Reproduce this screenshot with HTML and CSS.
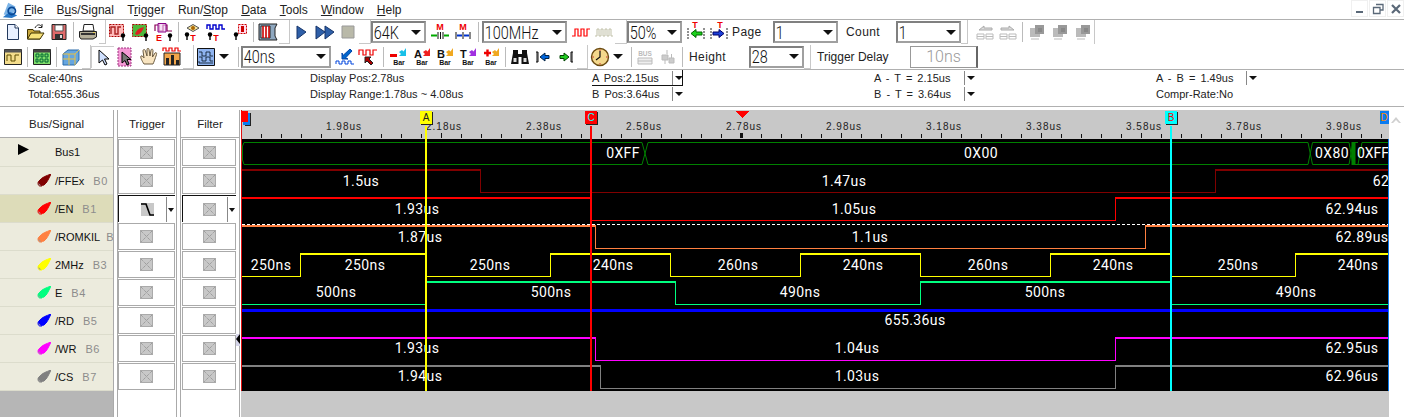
FILE: index.html
```html
<!DOCTYPE html>
<html lang="en">
<head>
    <meta charset="UTF-8">
    <title>Logic Analyzer</title>
    <link rel="stylesheet" href="styles.css">
</head>
<body>

<svg class="defs">
    <symbol id="pin" viewBox="0 0 8 8"><circle cx="4" cy="2.5" r="2.2" fill="#000"/><path d="M4 3V8" stroke="#000" stroke-width="1.4"/></symbol>
    <symbol id="new" viewBox="0 0 20 20"><path d="M4.5 2.5H12L15.5 6V17.5H4.5Z" fill="#e8f0ff" stroke="#23395d"/><path d="M12 2.5V6H15.5" fill="#fff" stroke="#23395d"/></symbol>
    <symbol id="open" viewBox="0 0 20 20"><path d="M1.5 7.5H7L8 9H14V17H1.5Z" fill="#c9a73c" stroke="#3d3000"/><path d="M1.5 17L5 11H18L14 17Z" fill="#f7e27a" stroke="#3d3000"/><path d="M9 6C11 2 14 2 16 5M16 2V5.5H12.5" fill="none" stroke="#222"/></symbol>
    <symbol id="save" viewBox="0 0 20 20"><path d="M3 2.5H17V17.5H3Z" fill="#e06a6a" stroke="#222"/><path d="M6 3H14V9H6Z" fill="#fff" stroke="#555"/><path d="M6 12H14V17H6Z" fill="#333"/><path d="M11 13H13V16H11Z" fill="#ddd"/></symbol>
    <symbol id="print" viewBox="0 0 20 20"><path d="M6 2.5H15L16 9H5Z" fill="#fff" stroke="#222"/><path d="M1.5 9.5H18.5V15L15 17H3L1.5 15Z" fill="#b5b09a" stroke="#222"/><path d="M3 12H17" stroke="#333" stroke-width="2"/><path d="M15 10.5H17" stroke="#e8d050"/></symbol>
    <symbol id="trigbox" viewBox="0 0 20 20"><path d="M1.5 2.5H15.5V14.5H1.5Z" fill="#fbb" stroke="#a00" stroke-dasharray="2 1"/><path d="M3 12V5H7V12H10V5H13" fill="none" stroke="#a22" stroke-width="1.4"/><use href="#pin" x="11" y="11" width="8" height="8"/></symbol>
    <symbol id="trigfill" viewBox="0 0 20 20"><path d="M1.5 2.5H15.5V14.5H1.5Z" fill="#4eb83c" stroke="#a00" stroke-dasharray="2 1"/><path d="M4 12C6 7 9 6 13 5C12 9 9 12 6 13Z" fill="#d22"/><use href="#pin" x="11" y="11" width="8" height="8"/></symbol>
    <symbol id="edge" viewBox="0 0 20 20"><path d="M1 9V3H5V9H9V3H13V9H18" fill="none" stroke="#805" stroke-width="1.2"/><path d="M4 1.5H12V10H4Z" fill="#f0c8f0" fill-opacity=".6" stroke="#808"/><text class="ico-t red" x="5" y="19">E</text><use href="#pin" x="12" y="11" width="8" height="8"/></symbol>
    <symbol id="eye" viewBox="0 0 20 20"><path d="M4 6L10 2.5L16 6L10 9.5Z" fill="#f4e4a0" stroke="#555"/><circle cx="10" cy="6" r="2" fill="#a60"/><use href="#pin" x="0" y="10" width="8" height="8"/><text class="ico-t red" x="10" y="19">T</text></symbol>
    <symbol id="pulse" viewBox="0 0 20 20"><path d="M1 7V3H4V7H7V3H10V7H13V3H16V7H19" fill="none" stroke="#00c" stroke-width="1.4"/><use href="#pin" x="0" y="10" width="8" height="8"/><text class="ico-t red" x="10" y="19">T</text></symbol>
    <symbol id="pinbox" viewBox="0 0 20 20"><path d="M9.5 2.5H17.5V11.5H9.5Z" fill="#fde" stroke="#c00" stroke-dasharray="2 1"/><path d="M12 4H15V10H12Z" fill="#c00"/><use href="#pin" x="3" y="10" width="8" height="8"/></symbol>
    <symbol id="film" viewBox="0 0 20 20"><path d="M1 2H19L17 6V14L19 18H1Z" fill="#8fa8c0" stroke="#222"/><path d="M3 4H12V16H3Z" fill="#fff" stroke="#222"/><path d="M5 4V16M8 4V16M11 4V16" stroke="#c00" stroke-width="1.6"/></symbol>
    <symbol id="play" viewBox="0 0 20 20"><path d="M5 4L14 10L5 17Z" fill="#2e5fa8" stroke="#17356a"/></symbol>
    <symbol id="run" viewBox="0 0 20 20"><path d="M1 4L10 10L1 17Z" fill="#2e5fa8" stroke="#17356a"/><path d="M10 4L19 10L10 17Z" fill="#2e5fa8" stroke="#17356a"/></symbol>
    <symbol id="stop" viewBox="0 0 20 20"><path d="M4 4H16V16H4Z" fill="#b9b9a9" stroke="#999"/></symbol>
    <symbol id="m1" viewBox="0 0 20 20"><text class="ico-t red" x="10" y="8">M</text><path d="M8 10V17M10.500 10V17M13 10V17" stroke="#111"/><path d="M1 13.500H7M19 13.500H14" stroke="#0a0" stroke-width="2"/></symbol>
    <symbol id="m2" viewBox="0 0 20 20"><text class="ico-t red" x="10" y="8">M</text><path d="M3 10V17M10 10V17M17 10V17" stroke="#111"/><path d="M4 13.500H9M11 13.500H16" stroke="#03c" stroke-width="2"/></symbol>
    <symbol id="wave-r" viewBox="0 0 20 20"><path d="M1 14H4V7H7V14H10V7H13V14H16V7H19" fill="none" stroke="#f00" stroke-width="1.2"/></symbol>
    <symbol id="wave-g" viewBox="0 0 20 20"><path d="M1 14H3V7H5V14H7V7H9V14H11V7H13V14H15V7H17V14H19" fill="none" stroke="#c0c0a8" stroke-width="1"/></symbol>
    <symbol id="tleft" viewBox="0 0 20 20"><path d="M2 6V17M18 6V17" stroke="#222" stroke-dasharray="2 1"/><path d="M5 11.500L10 7.500V10H16V13H10V15.500Z" fill="#1cd11c" stroke="#060"/><text class="ico-t red" x="9" y="6">T</text></symbol>
    <symbol id="tright" viewBox="0 0 20 20"><path d="M2 6V17M18 6V17" stroke="#222" stroke-dasharray="2 1"/><path d="M15 11.500L10 7.500V10H4V13H10V15.500Z" fill="#1b3fd8" stroke="#006"/><text class="ico-t red" x="11" y="6">T</text></symbol>
    <symbol id="page-l" viewBox="0 0 20 20"><path d="M4 8L9 4V6H17V8Z" fill="#ddd" stroke="#aaa"/><path d="M2 12H9V17H2ZM11 12H18V17H11ZM2 14.5H9M11 14.5H18" fill="none" stroke="#bbb"/></symbol>
    <symbol id="page-r" viewBox="0 0 20 20"><path d="M16 8L11 4V6H3V8Z" fill="#ddd" stroke="#aaa"/><path d="M2 12H9V17H2ZM11 12H18V17H11ZM2 14.5H9M11 14.5H18" fill="none" stroke="#bbb"/></symbol>
    <symbol id="gray" viewBox="0 0 20 20"><path d="M3 6H13V15H3Z" fill="#bbb"/><path d="M8 3H17V12H8Z" fill="#999"/><path d="M11 6H15V10H11Z" fill="#888"/><path d="M4 16H12V18H4Z" fill="#ddd"/></symbol>
    <symbol id="scope" viewBox="0 0 20 20"><path d="M1.5 2.5H18.5V17.5H1.5Z" fill="#f3dc8b" stroke="#222"/><path d="M1.5 2.5H18.5V5.5H1.5Z" fill="#555"/><path d="M4 14V8H8V14H12V8H16" fill="none" stroke="#5a4a00"/></symbol>
    <symbol id="bits" viewBox="0 0 20 20"><path d="M1.5 2.5H18.5V17.5H1.5Z" fill="#7fdc6a" stroke="#222"/><path d="M1.5 2.5H18.5V5.5H1.5Z" fill="#444"/><path d="M4 7H7V10H4ZM9 7H11V10H9ZM13 7H16V10H13ZM4 12H6V15H4ZM8 12H11V15H8ZM13 12H16V15H13Z" fill="none" stroke="#063"/></symbol>
    <symbol id="cube" viewBox="0 0 20 20"><path d="M2 7L7 3H18V13L14 18H2Z" fill="#66a6e0" stroke="#2a6aa8"/><path d="M2 7H14V18M14 7L18 3M8 7V18M2 12H14" fill="none" stroke="#e8c040"/></symbol>
    <symbol id="arrow" viewBox="0 0 20 20"><path d="M6 3V16L9.5 13L12 18L14 17L11.5 12H16Z" fill="#cfe0ff" stroke="#000"/></symbol>
    <symbol id="arrow-p" viewBox="0 0 20 20"><path d="M2 1H15V19H2Z" fill="#f49ad6" stroke="#a03080" stroke-dasharray="2 1"/><path d="M6 5V16L9 13.5L11 18L13 17L11 12.5H15Z" fill="#777" stroke="#000"/></symbol>
    <symbol id="hand" viewBox="0 0 20 20"><path d="M5 17C3 14 1 10 2 9C3 8 5 11 5 11L4 4C4 2 6 2 6.500 4L8 9L8 2.500C8 1 10 1 10 2.500L11 9L12 3C12.500 1.500 14 2 14 3.500L13.500 10L16 6C17 5 18 6 17.500 7.500C16 12 15 15 14 17Z" fill="#f8e4c0" stroke="#6a5a40"/></symbol>
    <symbol id="bars" viewBox="0 0 20 20"><path d="M1 4V1H4V4H7V1H10V4H13V1H16V4H19" fill="none" stroke="#e00" stroke-width="1.2"/><path d="M2 6H18V18H2Z" fill="#f2a64a" stroke="#222"/><path d="M4 18V11H7V18ZM9 18V8H12V18ZM14 18V13H17V18Z" fill="#222"/></symbol>
    <symbol id="grid" viewBox="0 0 20 20"><path d="M1.500 1.500H18.500V18.500H1.500Z" fill="#8fb4f0" stroke="#111"/><path d="M3 5H6V9H10V5H14V9H17M3 10H6V14H10V10H14V14H17M3 14V16H17" fill="none" stroke="#123" stroke-width=".9"/></symbol>
    <symbol id="to-wave" viewBox="0 0 20 20"><path d="M15 2L8 8.500L7 6V12H13L10.500 11L17 4Z" fill="#06c" stroke="#04a"/><path d="M1 17V14H4V17H7V14H10V17H13V14H16V17H19" fill="none" stroke="#04d"/></symbol>
    <symbol id="from-wave" viewBox="0 0 20 20"><path d="M1 8V3H5V8H8V3H12V8H15V3H19" fill="none" stroke="#e00" stroke-width="1.2"/><path d="M7 10V16L9 14L13 18L15 16L11 12L13 10Z" fill="#a00" stroke="#222"/></symbol>
    <symbol id="bar-red" viewBox="0 0 20 20"><path d="M1 7H8V10H1Z" fill="#e00"/><path d="M17 1V9H10L12 7L10 5L13 3L14.500 4.500Z" fill="#18c0e8"/><text class="ico-b" x="10" y="18">Bar</text></symbol>
    <symbol id="bar-a" viewBox="0 0 20 20"><text class="ico-l" x="2" y="11">A</text><path d="M18 1V9H11L13 7L11 5L14 3L15.500 4.500Z" fill="#f02020"/><text class="ico-b" x="10" y="18">Bar</text></symbol>
    <symbol id="bar-b" viewBox="0 0 20 20"><text class="ico-l" x="2" y="11">B</text><path d="M18 1V9H11L13 7L11 5L14 3L15.500 4.500Z" fill="#f0a820"/><text class="ico-b" x="10" y="18">Bar</text></symbol>
    <symbol id="bar-t" viewBox="0 0 20 20"><text class="ico-l" x="2" y="11">T</text><path d="M18 1V9H11L13 7L11 5L14 3L15.500 4.500Z" fill="#a030e0"/><text class="ico-b" x="10" y="18">Bar</text></symbol>
    <symbol id="bar-plus" viewBox="0 0 20 20"><path d="M3 6H10M6.500 2.500V9.500" stroke="#e00" stroke-width="2.400"/><path d="M18 1V9H11L13 7L11 5L14 3L15.500 4.500Z" fill="#f0a820"/><text class="ico-b" x="10" y="18">Bar</text></symbol>
    <symbol id="binoc" viewBox="0 0 20 20"><path d="M3 3H8V7H12V3H17V6L19 17H11.500V10H8.500V17H1L3 6Z" fill="#111"/><path d="M3.500 11H6.500V15H3.500ZM13.500 11H16.500V15H13.500Z" fill="#ddd"/></symbol>
    <symbol id="jump-l" viewBox="0 0 20 20"><path d="M3 5H5V15H3M4 5V15" fill="none" stroke="#111"/><path d="M7 10L12 6V8.500H16V11.500H12V14Z" fill="#06d" stroke="#024"/></symbol>
    <symbol id="jump-r" viewBox="0 0 20 20"><path d="M17 5H15V15H17M16 5V15" fill="none" stroke="#111"/><path d="M13 10L8 6V8.500H4V11.500H8V14Z" fill="#2c2" stroke="#040"/></symbol>
    <symbol id="clock" viewBox="0 0 20 20"><circle cx="10" cy="10" r="8.500" fill="#f4d88c" stroke="#6a4a10" stroke-width="1.400"/><path d="M10 4V10L6 13" fill="none" stroke="#111" stroke-width="1.200"/><path d="M10 2.500V4M10 16V17.500M2.500 10H4M16 10H17.500" stroke="#c33"/></symbol>
    <symbol id="bus-off" viewBox="0 0 20 20"><text class="ico-g" x="10" y="9">BUS</text><path d="M3 11H17V17H3ZM3 14H17" fill="#eee" stroke="#bbb"/></symbol>
    <symbol id="net-off" viewBox="0 0 20 20"><path d="M9 3V7M4 8H10V13H4ZM11 11H16V16H11ZM7 13V17M13.500 7V11" fill="#ccc" stroke="#bbb"/></symbol>
    <symbol id="cell-x" viewBox="0 0 13 13"><path d="M0 0H13V13H0Z" fill="#c8c8c8"/><path d="M.5.5H12.500V12.500H.5ZM1 1L12 12M12 1L1 12" fill="none" stroke="#8c8c8c" stroke-dasharray="1 1"/></symbol>
    <symbol id="cell-fall" viewBox="0 0 13 13"><path d="M0 0H13V13H0Z" fill="#c8c8c8"/><path d="M0 1H5L9 12H13" fill="none" stroke="#000" stroke-width="1.600"/></symbol>
    <symbol id="flag" viewBox="0 0 14 13"><path d="M1 9C1 7 3 7 3 7L5 12H3C2 12 1 11 1 9Z" fill="#999"/><path d="M2 7C5 3 9 2 14 0C12 4 10 9 7 11C5 12 1 10 2 7Z" fill="currentColor"/></symbol>
</svg>

<div class="menubar">
    <svg class="app-icon" viewBox="0 0 20 20"><path d="M3 15L8 2L16 6L13 17Z" fill="#7cb4e8"/><path d="M2 18L10 12L18 16L12 19Z" fill="#2878c8"/><circle cx="12" cy="11" r="4" fill="none" stroke="#0a4a98" stroke-width="2"/></svg>
    <nav class="menu">
        <span><u>F</u>ile</span>
        <span>B<u>u</u>s/Signal</span>
        <span>T<u>r</u>igger</span>
        <span>Run/<u>S</u>top</span>
        <span><u>D</u>ata</span>
        <span><u>T</u>ools</span>
        <span><u>W</u>indow</span>
        <span><u>H</u>elp</span>
    </nav>
    <div class="winbtns">
        <span class="winbtn"><svg viewBox="0 0 12 12"><path d="M2 9H9" stroke="#5a6878" stroke-width="2"/></svg></span>
        <span class="winbtn"><svg viewBox="0 0 12 12"><path d="M4 1.500H11V7H8M1.500 4.500H8V10.500H1.500Z" fill="none" stroke="#5a6878" stroke-width="1.300"/></svg></span>
        <span class="winbtn"><svg viewBox="0 0 12 12"><path d="M2 2L10 10M10 2L2 10" stroke="#5a6878" stroke-width="2.200"/></svg></span>
    </div>
</div>

<div class="toolbar row1">
    <span class="btn"><svg><use href="#new"/></svg></span>
    <span class="btn"><svg><use href="#open"/></svg></span>
    <span class="btn"><svg><use href="#save"/></svg></span>
    <i class="sep"></i>
    <span class="btn"><svg><use href="#print"/></svg></span>
    <i class="grip"></i>
    <span class="btn"><svg><use href="#trigbox"/></svg></span>
    <span class="btn"><svg><use href="#trigfill"/></svg></span>
    <span class="btn"><svg><use href="#edge"/></svg></span>
    <i class="sep"></i>
    <span class="btn"><svg><use href="#eye"/></svg></span>
    <span class="btn"><svg><use href="#pulse"/></svg></span>
    <span class="btn"><svg><use href="#pinbox"/></svg></span>
    <i class="sep"></i>
    <span class="btn"><svg><use href="#film"/></svg></span>
    <i class="grip wide"></i>
    <span class="btn"><svg><use href="#play"/></svg></span>
    <span class="btn"><svg><use href="#run"/></svg></span>
    <span class="btn"><svg><use href="#stop"/></svg></span>
    <i class="grip wider"></i>
    <div class="combo w55"><span>64K</span><b></b></div>
    <i class="gap2"></i>
    <span class="btn"><svg><use href="#m1"/></svg></span>
    <span class="btn"><svg><use href="#m2"/></svg></span>
    <i class="sep gap8"></i>
    <div class="combo w85"><span>100MHz</span><b></b></div>
    <i class="gap2"></i>
    <span class="btn"><svg><use href="#wave-r"/></svg></span>
    <span class="btn"><svg><use href="#wave-g"/></svg></span>
    <i class="grip wider"></i>
    <div class="combo w55"><span>50%</span><b></b></div>
    <i class="gap2"></i>
    <span class="btn"><svg><use href="#tleft"/></svg></span>
    <span class="btn"><svg><use href="#tright"/></svg></span>
    <span class="tb-label page">Page</span>
    <div class="combo w65"><span>1</span><b></b></div>
    <span class="tb-label count">Count</span>
    <div class="combo w65"><span>1</span><b></b></div>
    <i class="grip"></i>
    <span class="btn first-off"><svg><use href="#page-l"/></svg></span>
    <span class="btn"><svg><use href="#page-r"/></svg></span>
    <i class="sep"></i>
    <span class="btn"><svg><use href="#gray"/></svg></span>
    <span class="btn"><svg><use href="#gray"/></svg></span>
    <span class="btn"><svg><use href="#gray"/></svg></span>
    <i class="end"></i>
</div>

<div class="toolbar row2">
    <span class="btn"><svg><use href="#scope"/></svg></span>
    <i class="sep"></i>
    <span class="btn"><svg><use href="#bits"/></svg></span>
    <i class="sep"></i>
    <span class="btn"><svg><use href="#cube"/></svg></span>
    <i class="grip tools"></i>
    <span class="btn pressed"><svg><use href="#arrow"/></svg></span>
    <span class="btn"><svg><use href="#arrow-p"/></svg></span>
    <span class="btn"><svg><use href="#hand"/></svg></span>
    <span class="btn"><svg><use href="#bars"/></svg></span>
    <i class="grip wide"></i>
    <span class="btn"><svg><use href="#grid"/></svg></span>
    <b class="drop"></b>
    <i class="sep"></i>
    <div class="combo w90"><span>40ns</span><b></b></div>
    <i class="gap2"></i>
    <span class="btn"><svg><use href="#to-wave"/></svg></span>
    <span class="btn"><svg><use href="#from-wave"/></svg></span>
    <i class="sep gap8"></i>
    <span class="btn"><svg><use href="#bar-red"/></svg></span>
    <span class="btn"><svg><use href="#bar-a"/></svg></span>
    <span class="btn"><svg><use href="#bar-b"/></svg></span>
    <span class="btn"><svg><use href="#bar-t"/></svg></span>
    <span class="btn"><svg><use href="#bar-plus"/></svg></span>
    <i class="sep"></i>
    <span class="btn"><svg><use href="#binoc"/></svg></span>
    <span class="btn"><svg><use href="#jump-l"/></svg></span>
    <span class="btn"><svg><use href="#jump-r"/></svg></span>
    <i class="grip wide"></i>
    <span class="btn"><svg><use href="#clock"/></svg></span>
    <b class="drop"></b>
    <i class="sep thin"></i>
    <span class="btn"><svg><use href="#bus-off"/></svg></span>
    <span class="btn"><svg><use href="#net-off"/></svg></span>
    <i class="sep"></i>
    <span class="tb-label height">Height</span>
    <div class="combo w55"><span>28</span><b></b></div>
    <i class="grip"></i>
    <span class="tb-label delay">Trigger Delay</span>
    <div class="delay-box">10ns</div>
</div>

<div class="status">
    <div class="stat tight"><p>Scale:40ns</p><p>Total:655.36us</p></div>
    <div class="stat tight"><p>Display Pos:2.78us</p><p>Display Range:1.78us ~ 4.08us</p></div>
    <div class="stat">
        <p class="pick boxed"><span>A Pos:2.15us</span><b></b></p>
        <p class="pick"><span>B Pos:3.64us</span><b></b></p>
    </div>
    <div class="stat">
        <p class="pick"><span>A - T = 2.15us</span><b></b></p>
        <p class="pick"><span>B - T = 3.64us</span><b></b></p>
    </div>
    <div class="stat">
        <p class="pick"><span>A - B = 1.49us</span><b></b></p>
        <p>Compr-Rate:No</p>
    </div>
</div>

<div class="main">
    <div class="signals">
        <div class="col-head">Bus/Signal</div>
        <div class="sig bus"><svg class="tri" viewBox="0 0 11 11"><path d="M0 0L11 5.500L0 11Z"/></svg><span class="name">Bus1</span></div>
        <div class="sig"><svg class="flag c0"><use href="#flag"/></svg><span class="name">/FFEx</span><span class="bit">B0</span></div>
        <div class="sig active"><svg class="flag c1"><use href="#flag"/></svg><span class="name">/EN</span><span class="bit">B1</span></div>
        <div class="sig"><svg class="flag c2"><use href="#flag"/></svg><span class="name">/ROMKIL</span><span class="bit short">B</span></div>
        <div class="sig"><svg class="flag c3"><use href="#flag"/></svg><span class="name">2MHz</span><span class="bit">B3</span></div>
        <div class="sig"><svg class="flag c4"><use href="#flag"/></svg><span class="name">E</span><span class="bit">B4</span></div>
        <div class="sig"><svg class="flag c5"><use href="#flag"/></svg><span class="name">/RD</span><span class="bit">B5</span></div>
        <div class="sig"><svg class="flag c6"><use href="#flag"/></svg><span class="name">/WR</span><span class="bit">B6</span></div>
        <div class="sig"><svg class="flag c7"><use href="#flag"/></svg><span class="name">/CS</span><span class="bit">B7</span></div>
    </div>

    <div class="col trigger">
        <div class="col-head">Trigger</div>
        <div class="cell"><svg><use href="#cell-x"/></svg></div>
        <div class="cell"><svg><use href="#cell-x"/></svg></div>
        <div class="cell open"><svg><use href="#cell-fall"/></svg><b></b></div>
        <div class="cell"><svg><use href="#cell-x"/></svg></div>
        <div class="cell"><svg><use href="#cell-x"/></svg></div>
        <div class="cell"><svg><use href="#cell-x"/></svg></div>
        <div class="cell"><svg><use href="#cell-x"/></svg></div>
        <div class="cell"><svg><use href="#cell-x"/></svg></div>
        <div class="cell"><svg><use href="#cell-x"/></svg></div>
    </div>

    <div class="col filter">
        <div class="col-head">Filter</div>
        <div class="cell"><svg><use href="#cell-x"/></svg></div>
        <div class="cell"><svg><use href="#cell-x"/></svg></div>
        <div class="cell open"><svg><use href="#cell-x"/></svg><b></b></div>
        <div class="cell"><svg><use href="#cell-x"/></svg></div>
        <div class="cell"><svg><use href="#cell-x"/></svg></div>
        <div class="cell"><svg><use href="#cell-x"/></svg></div>
        <div class="cell"><svg><use href="#cell-x"/></svg></div>
        <div class="cell"><svg><use href="#cell-x"/></svg></div>
        <div class="cell"><svg><use href="#cell-x"/></svg></div>
        <span class="splitter"><svg viewBox="0 0 4 10"><path d="M4 0V10L0 5Z"/></svg></span>
    </div>

    <!-- viewBox uses page coordinates so the trace numbers read straight off the capture -->
    <svg class="wave" viewBox="241 110 1148 307">
        <rect class="ruler" x="241" y="110" width="1148" height="307"/>
        <rect class="scope" x="242" y="139" width="1147" height="252"/>

        <path class="tick" d="M261.500 134V138M281.500 134V138M301.500 134V138M321.500 134V138M361.500 134V138M381.500 134V138M401.500 134V138M421.500 134V138M461.500 134V138M481.500 134V138M501.500 134V138M521.500 134V138M561.500 134V138M581.500 134V138M601.500 134V138M621.500 134V138M661.500 134V138M681.500 134V138M701.500 134V138M721.500 134V138M761.500 134V138M781.500 134V138M801.500 134V138M821.500 134V138M861.500 134V138M881.500 134V138M901.500 134V138M921.500 134V138M961.500 134V138M981.500 134V138M1001.500 134V138M1021.500 134V138M1061.500 134V138M1081.500 134V138M1101.500 134V138M1121.500 134V138M1161.500 134V138M1181.500 134V138M1201.500 134V138M1221.500 134V138M1261.500 134V138M1281.500 134V138M1301.500 134V138M1321.500 134V138M1361.500 134V138M1381.500 134V138"/>
        <path class="tick" d="M341.500 133V138M441.500 133V138M541.500 133V138M641.500 133V138M841.500 133V138M941.500 133V138M1041.500 133V138M1141.500 133V138M1241.500 133V138M1341.500 133V138"/>
        <path class="tick now" d="M741.500 133V138"/>
        <g class="rule-txt">
            <text x="344" y="130">1.98us</text><text x="444" y="130">2.18us</text><text x="544" y="130">2.38us</text>
            <text x="644" y="130">2.58us</text><text x="744" y="130">2.78us</text><text x="844" y="130">2.98us</text>
            <text x="944" y="130">3.18us</text><text x="1044" y="130">3.38us</text><text x="1144" y="130">3.58us</text>
            <text x="1244" y="130">3.78us</text><text x="1344" y="130">3.98us</text>
        </g>

        <!-- bus -->
        <path class="bus" d="M250 142.500H244L242.500 146V160L244 164.500H642L648 142.500H1308L1312.500 164.500H1349L1353 142.500H1358M250 142.500H642L648 164.500H1308L1312.500 142.500H1349L1353 164.500H1358L1362 142.500H1389M1358 164.500L1362 164.500H1389"/>
        <path class="bus fat" d="M1352.500 142V165M1354.500 142V165"/>

        <!-- bit traces: high level thick, low level thin -->
        <path class="c0 hi" d="M242 170H481M1215 170H1389"/><path class="c0" d="M480.500 170V192.500H1215.500V170"/>
        <path class="c1 hi" d="M242 198H591M1115 198H1389"/><path class="c1" d="M591.500 198V220.500H1115.500V198"/>
        <path class="dash" d="M242 224.500H1389"/>
        <path class="c2 hi" d="M242 226H596M1145 226H1389"/><path class="c2" d="M595.500 226V248.500H1145.500V226"/>
        <path class="c3 hi" d="M300 254H426M550 254H671M800 254H921M1050 254H1171M1295 254H1389"/>
        <path class="c3" d="M242 276.500H300.500V254M425.500 254V276.500H550.500V254M670.500 254V276.500H800.500V254M920.500 254V276.500H1050.500V254M1170.500 254V276.500H1295.500V254"/>
        <path class="c4 hi" d="M426 282H676M920 282H1171"/>
        <path class="c4" d="M242 304.500H426.500V282M675.500 282V304.500H920.500V282M1170.500 282V304.500H1389"/>
        <path class="c5 hi fat3" d="M242 310H1389"/>
        <path class="c6 hi" d="M242 338H596M1115 338H1389"/><path class="c6" d="M595.500 338V360.500H1115.500V338"/>
        <path class="c7 hi" d="M242 366H601M1115 366H1389"/><path class="c7" d="M600.500 366V388.500H1115.500V366"/>

        <g class="lbl">
            <text x="623" y="158">0XFF</text><text x="981" y="158">0X00</text><text x="1332" y="158">0X80</text><text class="snug" x="1373" y="158">0XFF</text>
            <text x="361" y="186">1.5us</text><text x="844" y="186">1.47us</text><text x="1381" y="186">62</text>
            <text x="417" y="214">1.93us</text><text x="854" y="214">1.05us</text><text x="1352" y="214">62.94us</text>
            <text x="420" y="242">1.87us</text><text x="870" y="242">1.1us</text><text x="1362" y="242">62.89us</text>
            <text x="271" y="270">250ns</text><text x="365" y="270">250ns</text><text x="490" y="270">250ns</text><text x="613" y="270">240ns</text><text x="738" y="270">260ns</text><text x="863" y="270">240ns</text><text x="988" y="270">260ns</text><text x="1113" y="270">240ns</text><text x="1238" y="270">250ns</text><text x="1358" y="270">240ns</text>
            <text x="336" y="297">500ns</text><text x="551" y="297">500ns</text><text x="800" y="297">490ns</text><text x="1045" y="297">500ns</text><text x="1296" y="297">490ns</text>
            <text x="915" y="325">655.36us</text>
            <text x="417" y="353">1.93us</text><text x="857" y="353">1.04us</text><text x="1352" y="353">62.95us</text>
            <text x="420" y="381">1.94us</text><text x="857" y="381">1.03us</text><text x="1352" y="381">62.96us</text>
        </g>

        <!-- cursors and their flags -->
        <path class="cur a" d="M426 126V391"/>
        <path class="cur b" d="M591 126V391"/>
        <path class="cur c" d="M1171 126V391"/>
        <rect class="edge-l" x="241" y="110" width="1" height="281"/>
        <rect class="edge-r" x="1388" y="139" width="1" height="252"/>

        <rect class="mk-sh" x="245" y="113" width="6" height="13"/><rect fill="#0a7cf0" x="243" y="113" width="7" height="12"/><rect fill="#f00" x="241" y="111" width="7" height="11"/>
        <rect class="mk-sh" x="421" y="112" width="12" height="13"/><rect fill="#ff0" x="420" y="111" width="12" height="13"/><text class="mk mk-k" x="426" y="121">A</text>
        <rect class="mk-sh" x="586" y="112" width="12" height="13"/><rect fill="#f00" x="585" y="111" width="12" height="13"/><text class="mk mk-c" x="591" y="121">C</text>
        <rect class="mk-sh" x="1166" y="112" width="12" height="13"/><rect fill="#0ff" x="1165" y="111" width="12" height="13"/><text class="mk mk-r" x="1171" y="121">B</text>
        <rect fill="#0a7cf0" x="1380" y="111" width="9" height="13"/><text class="mk mk-o" x="1384" y="121">D</text>
        <path class="now-mark" d="M735 111H749L742 118Z"/>
    </svg>

    <div class="vscroll"><svg viewBox="0 0 10 6"><path d="M0 6L5 0L10 6L8 6L5 3L2 6Z"/></svg></div>
</div>

</body>
</html>
```

FILE: styles.css
```css
/* Global */
* {
    box-sizing: border-box;
}

html, body {
    margin: 0;
    padding: 0;
}

body {
    width: 1404px;
    height: 417px;
    overflow: hidden;
    background: #fff;
    color: #111;
    font-family: "Liberation Sans", Arial, sans-serif;
    font-size: 11px;
}

p {
    margin: 0;
}

.defs {
    display: none;
}

.ico-t { font: bold 9px "Liberation Sans", sans-serif; text-anchor: middle; fill: #111; }
.ico-t.red { fill: #e00; }
.ico-b { font: bold 7px "Liberation Sans", sans-serif; text-anchor: middle; fill: #111; }
.ico-l { font: bold 11px "Liberation Sans", sans-serif; fill: #111; }
.ico-g { font: bold 6.500px "Liberation Sans", sans-serif; text-anchor: middle; fill: #bbb; }

/* Menu */
.menubar {
    display: flex;
    align-items: center;
    height: 20px;
    border-bottom: 1px solid #b0b0b0;
}

.app-icon {
    width: 18px;
    height: 18px;
    margin: 0 5px 0 1px;
    flex: none;
}

.menu {
    display: flex;
    gap: 13.200px;
    font-size: 12px;
    color: #222;
}

.winbtns {
    display: flex;
    gap: 1px;
    margin-left: auto;
    align-self: flex-start;
}

.winbtn {
    display: flex;
    align-items: center;
    justify-content: center;
    width: 17px;
    height: 17px;
    border: 1px solid #f0f0f0;
}

.winbtn svg {
    width: 12px;
    height: 12px;
}

/* Toolbars */
.toolbar {
    display: flex;
    align-items: center;
    padding-left: 1px;
}

.row1 {
    height: 24px;
}

.row2 {
    height: 26px;
    border-bottom: 1px solid #b0b0b0;
}

.btn {
    display: flex;
    align-items: center;
    justify-content: center;
    flex: none;
    width: 23px;
    height: 22px;
}

.btn svg {
    width: 20px;
    height: 20px;
}

.btn.pressed {
    border-top: 1px solid #ccc;
    border-left: 1px solid #ccc;
}

.btn.first-off {
    margin-left: 5px;
}

.sep {
    flex: none;
    width: 6px;
    height: 20px;
    background: linear-gradient(#bbb, #bbb) center / 1px 100% no-repeat;
}

.sep.gap8 {
    width: 8px;
}

.sep.thin {
    width: 4px;
}

.grip {
    flex: none;
    width: 7px;
    height: 24px;
    border-right: 1px solid #c8c8c8;
    border-bottom: 1px solid #c8c8c8;
}

.grip.tools {
    width: 9px;
}

.grip.wide {
    width: 11px;
}

.grip.wider {
    width: 12px;
}

.gap2 {
    flex: none;
    width: 2px;
}

.end {
    flex: none;
    width: 1px;
    height: 24px;
    background: #c8c8c8;
}

.drop {
    flex: none;
    width: 10px;
    height: 0;
    margin: 0 6px 0 2px;
    border: 5px solid transparent;
    border-top: 5px solid #111;
    border-bottom: 0;
}

.tb-label {
    flex: none;
    font-size: 12px;
    letter-spacing: .4px;
    color: #222;
}

.tb-label.page { width: 43px; padding-left: 2px; }
.tb-label.count { width: 58px; padding-left: 8px; }
.tb-label.height { width: 64px; padding-left: 4px; }
.tb-label.delay { width: 99px; padding-left: 6px; letter-spacing: 0; }

/* Combo boxes */
.combo {
    display: flex;
    align-items: center;
    flex: none;
    height: 22px;
    border: 2px solid #808080;
    border-right-color: #a0a0a0;
    border-bottom-color: #a0a0a0;
    font-family: Roboto, "Liberation Sans", sans-serif;
    font-weight: 300;
    font-size: 18px;
    color: #111;
}

.combo span {
    flex: 1;
    min-width: 0;
    padding-left: 1px;
    white-space: nowrap;
    transform: scaleX(.8);
    transform-origin: left center;
}

.combo b {
    flex: none;
    width: 16px;
    height: 100%;
    display: flex;
    align-items: center;
    justify-content: center;
}

.combo b::after {
    content: "";
    border: 5px solid transparent;
    border-top: 5px solid #111;
    border-bottom: 0;
}

.w55 { width: 55px; }
.w65 { width: 65px; }
.w85 { width: 85px; }
.w90 { width: 90px; }

.delay-box {
    flex: none;
    width: 68px;
    height: 22px;
    border: 1px solid #999;
    border-right: 2px solid #666;
    text-align: center;
    color: #999;
    font-family: Roboto, "Liberation Sans", sans-serif;
    font-weight: 300;
    font-size: 16px;
    line-height: 20px;
}

/* Status panel */
.status {
    display: grid;
    grid-template-columns: repeat(5, 282px);
    height: 37px;
    padding-left: 28px;
    border-bottom: 1px solid #b0b0b0;
    font-size: 11px;
    word-spacing: 2px;
    color: #222;
}

.stat.tight {
    word-spacing: 0;
}

.stat p {
    display: flex;
    align-items: center;
    height: 16px;
}

.pick span {
    flex: none;
    width: 78px;
}

.stat:nth-child(4) .pick span,
.stat:nth-child(5) .pick span {
    width: 88px;
}

.pick b {
    flex: none;
    width: 12px;
    height: 14px;
    border-left: 1px solid #888;
    display: flex;
    align-items: center;
    justify-content: center;
    margin-left: 2px;
}

.pick b::after {
    content: "";
    border: 4px solid transparent;
    border-top: 4px solid #111;
    border-bottom: 0;
}

.boxed {
    width: 91px;
    border-bottom: 1px solid #111;
    background: linear-gradient(#111, #111) right / 1px 100% no-repeat;
}

/* Main area */
.main {
    display: flex;
    height: 307px;
    margin-top: 3px;
}

.col-head {
    display: flex;
    align-items: center;
    justify-content: center;
    height: 28px;
    font-size: 11.500px;
    color: #222;
    background: #fff;
    border-bottom: 1px solid #aaa;
}

/* Signal names */
.signals {
    flex: none;
    width: 114px;
    height: 307px;
    background: #b6b6b6;
    border-right: 1px solid #aaa;
    overflow: hidden;
}

.sig {
    display: flex;
    align-items: center;
    height: 28px;
    padding-left: 37px;
    background: #ecebdd;
    border-bottom: 1px solid #dcdccc;
    white-space: nowrap;
    font-size: 11px;
}

.sig.bus {
    padding-left: 18px;
    height: 29px;
}

.sig.active {
    background: #dddcb9;
}

.tri {
    width: 11px;
    height: 11px;
    margin: -6px 26px 0 0;
}

.flag {
    flex: none;
    width: 14px;
    height: 13px;
    margin-right: 4px;
}

.name {
    color: #111;
}

.bit {
    margin-left: 9px;
    color: #8c8c8c;
    letter-spacing: .5px;
}

.bit.short {
    margin-left: 6px;
}

.c0 { color: #800000; stroke: #800000; }
.c1 { color: #f00; stroke: #f00; }
.c2 { color: #ff8040; stroke: #ff8040; }
.c3 { color: #ff0; stroke: #ff0; }
.c4 { color: #00ff80; stroke: #00ff80; }
.c5 { color: #00f; stroke: #00f; }
.c6 { color: #f0f; stroke: #f0f; }
.c7 { color: #808080; stroke: #808080; }

/* Trigger and filter columns */
.col {
    flex: none;
    height: 307px;
    border: 1px solid #aaa;
    border-width: 0 1px;
    background: #fff;
    position: relative;
}

.trigger {
    width: 60px;
    margin-left: 3px;
}

.filter {
    width: 60px;
    margin-left: 3px;
    margin-right: 1px;
}

.col .col-head {
    margin-bottom: 1px;
}

.cell {
    display: flex;
    align-items: center;
    justify-content: center;
    position: relative;
    width: 57px;
    height: 27px;
    margin-bottom: 1px;
    border: 1px solid #aaa;
}

.filter .cell {
    width: 54px;
    margin-left: 1px;
}

.cell svg {
    width: 13px;
    height: 13px;
}

.cell.open {
    border: 0;
    border-top: 1px solid #111;
    border-left: 1px solid #111;
}

.cell.open b {
    position: absolute;
    top: 1px;
    right: 0;
    bottom: 0;
    width: 9px;
    border-left: 1px solid #888;
    display: flex;
    align-items: center;
    justify-content: center;
}

.cell.open b::after {
    content: "";
    border: 3px solid transparent;
    border-top: 4px solid #111;
    border-bottom: 0;
}

/* little collapse handle sitting on the column edge */
.splitter {
    position: absolute;
    left: 55px;
    top: 224px;
    width: 4px;
    height: 12px;
    background: #d4d4e8;
}

.splitter svg {
    display: block;
    width: 4px;
    height: 10px;
}

/* Waveform */
.wave {
    flex: none;
    width: 1148px;
    height: 307px;
    shape-rendering: crispEdges;
}

.wave path {
    fill: none;
    stroke-width: 1;
}

.ruler { fill: #c8c8c8; }
.scope { fill: #000; }
.tick { stroke: #111; }
.wave .tick.now { stroke-width: 3; }
.wave .bus { stroke: #008000; shape-rendering: auto; }
.wave .bus.fat { stroke-width: 2; }
.wave .hi { stroke-width: 2; }
.wave .fat3 { stroke-width: 3; }
.wave .dash { stroke: #fff; stroke-dasharray: 3 2; }
.wave .cur { stroke-width: 2; }
.wave .cur.a { stroke: #ff0; }
.wave .cur.b { stroke: #f00; }
.wave .cur.c { stroke: #0ff; }
.wave .now-mark { fill: #f00; }

.edge-l { fill: #e01010; }
.edge-r { fill: #0a7cf0; }
.mk-sh { fill: #222; }

.rule-txt text {
    font-size: 10px;
    letter-spacing: 1px;
    text-anchor: middle;
    fill: #222;
}

.lbl text {
    font-size: 14px;
    font-family: Roboto, "Liberation Sans", sans-serif;
    font-weight: 400;
    letter-spacing: .4px;
    text-anchor: middle;
    fill: #fff;
}

.lbl text.snug {
    letter-spacing: 0;
}

.mk {
    font-size: 10px;
    text-anchor: middle;
}

.mk-k { fill: #222; }
.mk-c { fill: #0ff; }
.mk-r { fill: #f00; }
.mk-o { fill: #f80; }

/* Scrollbar */
.vscroll {
    flex: 1;
    padding: 7px 0 0 2px;
}

.vscroll svg {
    display: block;
    width: 10px;
    height: 6px;
    fill: #d0d0d0;
}
```
